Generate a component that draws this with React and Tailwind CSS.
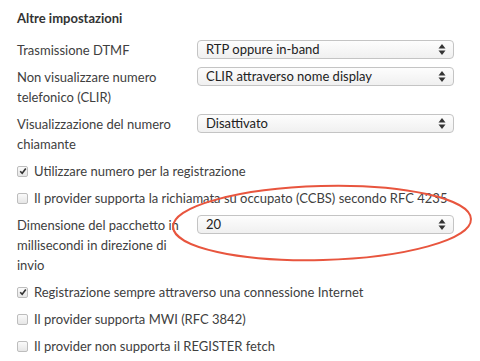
import React from "react";

const font = { fontFamily: "Lato, 'Open Sans', sans-serif" };

function Arrows() {
  return (
    <svg width="8" height="13" viewBox="0 0 8 13" className="absolute right-[7px] top-[2px]">
      <path d="M4 1 L7.5 5.5 L0.5 5.5 Z" fill="#333" />
      <path d="M4 12 L7.5 7.5 L0.5 7.5 Z" fill="#333" />
    </svg>
  );
}

function Select({ value }) {
  return (
    <div className="relative h-[19px] w-[257px] rounded-[4px] border border-[#c4c4c4] bg-gradient-to-b from-[#fdfdfd] to-[#f0f0f0] pl-[8px] text-[13px] leading-[17px] text-[#222]">
      {value}
      <Arrows />
    </div>
  );
}

function Row({ label, value }) {
  return (
    <div className="flex items-start">
      <div className="w-[180px] text-[13px] leading-[20px] text-[#404040]">{label}</div>
      <Select value={value} />
    </div>
  );
}

function Check({ checked, label }) {
  return (
    <div className="flex h-[20px] items-center">
      <div className="mr-[6px] flex h-[11px] w-[11px] items-center justify-center rounded-[2px] border border-[#bdbdbd] bg-gradient-to-b from-[#fafafa] to-[#e6e6e6]">
        {checked && (
          <svg width="8" height="8" viewBox="0 0 8 8">
            <path d="M1.2 4.2 L3.2 6.3 L6.8 1.5" stroke="#333" strokeWidth="1.6" fill="none" />
          </svg>
        )}
      </div>
      <span className="text-[13px] leading-[20px] text-[#404040]">{label}</span>
    </div>
  );
}

export default function App() {
  return (
    <div className="relative h-[361px] w-[480px] overflow-hidden bg-white" style={font}>
      <div className="flex flex-col gap-[7px] pl-[17px] pt-[8px]">
        <div className="mb-[5px] text-[13px] font-bold leading-[20px] text-[#333]">Altre impostazioni</div>
        <Row label="Trasmissione DTMF" value="RTP oppure in-band" />
        <Row label="Non visualizzare numero telefonico (CLIR)" value="CLIR attraverso nome display" />
        <Row label="Visualizzazione del numero chiamante" value="Disattivato" />
        <Check checked label="Utilizzare numero per la registrazione" />
        <Check label="Il provider supporta la richiamata su occupato (CCBS) secondo RFC 4235" />
        <Row label="Dimensione del pacchetto in millisecondi in direzione di invio" value="20" />
        <Check checked label="Registrazione sempre attraverso una connessione Internet" />
        <Check label="Il provider supporta MWI (RFC 3842)" />
        <Check label="Il provider non supporta il REGISTER fetch" />
      </div>
      <svg className="pointer-events-none absolute left-0 top-0" width="480" height="361">
        <ellipse cx="322" cy="223" rx="149" ry="37" transform="rotate(-1.5 322 223)" fill="none" stroke="#e8553e" strokeWidth="2" />
      </svg>
    </div>
  );
}
